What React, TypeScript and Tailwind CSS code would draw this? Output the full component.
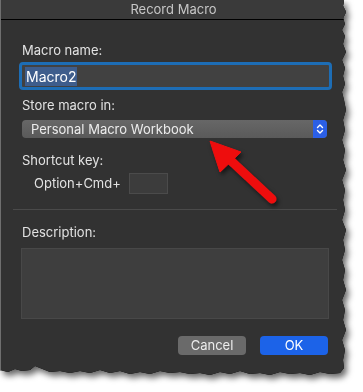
import React from "react";

function RedArrow() {
  return (
    <svg
      className="absolute left-0 top-0 pointer-events-none"
      width="363"
      height="392"
      viewBox="0 0 363 392"
    >
      <defs>
        <filter id="arrowShadow" x="-20%" y="-20%" width="140%" height="140%">
          <feDropShadow dx="2" dy="3" stdDeviation="2" floodColor="#000" floodOpacity="0.55" />
        </filter>
      </defs>
      <g filter="url(#arrowShadow)" fill="#ee1111" stroke="#ee1111">
        <line x1="272" y1="199" x2="228" y2="158" strokeWidth="9" strokeLinecap="round" />
        <polygon points="210,141 241,152 220,172" strokeWidth="1" strokeLinejoin="round" />
      </g>
    </svg>
  );
}

export default function App() {
  return (
    <div className="relative w-[363px] h-[392px] bg-white overflow-hidden" style={{ fontFamily: "Inter, 'Noto Sans', sans-serif" }}>
      <div className="[filter:drop-shadow(0_0_0.6px_#000)_drop-shadow(3px_4px_3px_rgba(0,0,0,0.6))]">
        <div className="w-[346px] h-[378px] bg-[#323232] border-l border-[#6f6f6f] flex flex-col [clip-path:polygon(0_0,344px_0,343px_6px,346px_12px,343px_18px,345px_24px,342px_30px,345px_36px,343px_44px,346px_52px,342px_60px,345px_68px,343px_76px,345px_84px,342px_92px,344px_100px,346px_110px,343px_120px,345px_130px,342px_140px,345px_150px,343px_160px,346px_170px,342px_180px,345px_190px,343px_200px,345px_210px,342px_220px,346px_230px,343px_240px,345px_250px,342px_260px,345px_270px,343px_280px,346px_290px,342px_300px,345px_310px,343px_320px,346px_330px,342px_340px,345px_350px,343px_360px,344px_368px,340px_373px,330px_374px,320px_372px,310px_375px,300px_373px,290px_374px,280px_372px,270px_375px,260px_373px,250px_374px,240px_371px,230px_374px,220px_372px,210px_375px,200px_373px,190px_374px,180px_372px,170px_373px,160px_371px,150px_374px,140px_372px,130px_374px,120px_371px,110px_373px,100px_370px,90px_373px,80px_371px,70px_373px,60px_371px,50px_372px,40px_368px,35px_366px,30px_370px,22px_371px,15px_369px,8px_372px,0_370px)]">
          <div className="h-[20px] shrink-0 bg-[#3a3a3a] border-b border-black text-center text-[13px] leading-[19px] text-[#c6c6c6]">
            Record Macro
          </div>
          <div className="flex flex-col pl-[21px]">
            <div className="mt-[22px] h-[16px] text-[13px] leading-[16px] text-[#e2e2e2]">Macro name:</div>
            <div className="mt-[4px] ml-[-3px] w-[313px] h-[28px] rounded-[4px] border-[3px] border-[#1d6db5] bg-[#414141] flex items-center pl-[3px]">
              <span className="bg-[#3e5d8c] h-[19px] px-[1px] text-[14px] leading-[19px] text-white">Macro2</span>
            </div>
            <div className="mt-[7px] h-[16px] text-[13px] leading-[16px] text-[#e2e2e2]">Store macro in:</div>
            <div className="mt-[7px] w-[305px] h-[18px] rounded-[4px] bg-gradient-to-b from-[#676767] to-[#5a5a5a] flex items-center justify-between">
              <span className="pl-[9px] text-[13px] leading-[18px] text-[#ececec]">Personal Macro Workbook</span>
              <span className="w-[14px] h-[18px] rounded-r-[4px] bg-[#2b5fe6] flex items-center justify-center">
                <svg width="8" height="12" viewBox="0 0 8 12" fill="none" stroke="#fff" strokeWidth="1.4" strokeLinecap="round" strokeLinejoin="round">
                  <path d="M1.5 4.5 L4 2 L6.5 4.5" />
                  <path d="M1.5 7.5 L4 10 L6.5 7.5" />
                </svg>
              </span>
            </div>
            <div className="mt-[14px] h-[16px] text-[13px] leading-[16px] text-[#e2e2e2]">Shortcut key:</div>
            <div className="mt-[5px] h-[21px] flex items-center pl-[12px]">
              <span className="text-[13px] text-[#e2e2e2] w-[95px]">Option+Cmd+</span>
              <span className="w-[39px] h-[21px] bg-[#3c3c3c] border border-[#4b4b4b]" />
            </div>
            <div className="mt-[15px] ml-[-9px] w-[324px] h-px bg-[#4a4a4a]" />
            <div className="mt-[14px] h-[16px] text-[13px] leading-[16px] text-[#e2e2e2]">Description:</div>
            <div className="mt-[8px] ml-[-1px] w-[308px] h-[71px] bg-[#3e3e3e] border border-[#484848]" />
            <div className="mt-[17px] flex w-[306px] justify-end gap-[14px]">
              <div className="w-[68px] h-[19px] rounded-[4px] bg-[#6a6a6a] text-center text-[13px] leading-[19px] text-[#ececec]">Cancel</div>
              <div className="w-[68px] h-[19px] rounded-[4px] bg-[#1c63e8] text-center text-[13px] leading-[19px] text-white">OK</div>
            </div>
          </div>
        </div>
      </div>
      <RedArrow />
    </div>
  );
}
